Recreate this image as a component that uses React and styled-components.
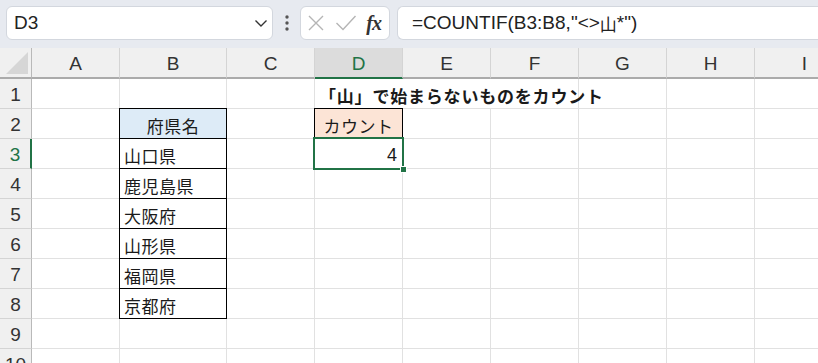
import React from "react";
import styled, { createGlobalStyle, css } from "styled-components";

const GREEN = "#217346";
const GRID = "#e1e1e1";

const GlobalStyle = createGlobalStyle`
  html, body {
    margin: 0;
    padding: 0;
    background: #fff;
    overflow: hidden;
  }
  body {
    font-family: "Liberation Sans", Arial, sans-serif;
  }
`;

const Page = styled.div`
  width: 818px;
  height: 363px;
  overflow: hidden;
  display: flex;
  flex-direction: column;
`;

const Toolbar = styled.div`
  display: flex;
  align-items: center;
  height: 48px;
  padding: 0 0 2px 6px;
  box-sizing: border-box;
  background: #e7eaf0;
  flex-shrink: 0;
`;

const Box = styled.div`
  height: 34px;
  box-sizing: border-box;
  background: #fff;
  border: 1px solid #d3d7de;
  border-radius: 6px;
  display: flex;
  align-items: center;
`;

const NameBox = styled(Box)`
  width: 267px;
  padding: 0 4px 0 7px;
  justify-content: space-between;
  font-size: 19px;
  color: #222;
`;

const Dots = styled.div`
  width: 27px;
  display: flex;
  justify-content: center;
`;

const FxBox = styled(Box)`
  width: 90px;
  padding: 0 6px 0 6px;
  justify-content: space-between;
`;

const Fx = styled.span`
  font-family: "Liberation Serif", "DejaVu Serif", serif;
  font-style: italic;
  font-weight: 700;
  font-size: 20px;
  color: #333;
  letter-spacing: -1px;
  margin-right: 2px;
`;

const FormulaBox = styled(Box)`
  flex: 1;
  margin-left: 7px;
  padding-left: 14px;
  border-right: none;
  border-radius: 6px 0 0 6px;
  font-size: 19px;
  color: #222;
  white-space: nowrap;
`;

const Cjk = styled.span`
  font-family: "Noto Sans CJK JP", sans-serif;
  font-size: 17px;
`;

const Sheet = styled.div`
  display: grid;
  grid-template-columns: 32px 88px 107px 88px 88px 88px 88px 88px 88px 100px;
  grid-template-rows: 31px;
  grid-auto-rows: 30px;
`;

const Corner = styled.div`
  background: #f0f0f0;
  border-right: 1px solid #b9b9b9;
  border-bottom: 2px solid #ababab;
  box-sizing: border-box;
  display: flex;
  align-items: flex-end;
  justify-content: flex-end;
  padding: 0 3px 3px 0;
`;

const ColHead = styled.div`
  box-sizing: border-box;
  background: ${(p) => (p.$active ? "#dcdcdc" : "#f0f0f0")};
  border-right: 1px solid #d4d4d4;
  border-bottom: 2px solid ${(p) => (p.$active ? GREEN : "#ababab")};
  color: ${(p) => (p.$active ? GREEN : "#333")};
  font-size: 19px;
  display: flex;
  align-items: center;
  justify-content: center;
  padding-top: 2px;
`;

const RowHead = styled.div`
  box-sizing: border-box;
  background: #f0f0f0;
  border-right: ${(p) => (p.$active ? `2px solid ${GREEN}` : "1px solid #b9b9b9")};
  border-bottom: 1px solid #d4d4d4;
  color: ${(p) => (p.$active ? GREEN : "#333")};
  font-size: 19px;
  display: flex;
  align-items: center;
  justify-content: center;
  padding-top: 2px;
`;

const Cell = styled.div`
  position: relative;
  box-sizing: border-box;
  border-right: 1px solid ${GRID};
  border-bottom: 1px solid ${GRID};
  background: ${(p) => p.$fill || "transparent"};
  display: flex;
  align-items: center;
  justify-content: ${(p) =>
    p.$align === "center" ? "center" : p.$align === "right" ? "flex-end" : "flex-start"};
  padding: 3px 4px 0 4px;
  font-family: "Noto Sans CJK JP", sans-serif;
  font-size: 17px;
  letter-spacing: 0.5px;
  color: #1a1a1a;
  white-space: nowrap;
  ${(p) => p.$span && css`grid-column: span ${p.$span};`}
  ${(p) =>
    p.$boxed &&
    css`
      &::after {
        content: "";
        position: absolute;
        inset: -1px;
        border: 1px solid #000;
        pointer-events: none;
      }
    `}
  ${(p) =>
    p.$selected &&
    css`
      z-index: 2;
      &::after {
        content: "";
        position: absolute;
        top: -2px;
        left: -2px;
        right: -2px;
        bottom: -2px;
        border: 2px solid ${GREEN};
        pointer-events: none;
      }
    `}
`;

const Title = styled.span`
  font-weight: 700;
  font-size: 17px;
  letter-spacing: 0.8px;
  position: relative;
  z-index: 1;
`;

const Num = styled.span`
  font-family: "Liberation Sans", Arial, sans-serif;
  font-size: 18px;
  letter-spacing: 0;
  margin-right: 1px;
`;

const FillHandle = styled.div`
  position: absolute;
  right: -5px;
  bottom: -5px;
  width: 5px;
  height: 5px;
  background: ${GREEN};
  border: 1px solid #fff;
  z-index: 3;
`;

const cols = ["A", "B", "C", "D", "E", "F", "G", "H", "I"];
const prefs = ["山口県", "鹿児島県", "大阪府", "山形県", "福岡県", "京都府"];

const Chevron = () => (
  <svg width="14" height="9" viewBox="0 0 14 9">
    <path d="M1.5 1.5 L7 7 L12.5 1.5" fill="none" stroke="#333" strokeWidth="1.4" />
  </svg>
);

const VDots = () => (
  <svg width="4" height="16" viewBox="0 0 4 16">
    <circle cx="2" cy="2" r="1.7" fill="#555" />
    <circle cx="2" cy="8" r="1.7" fill="#555" />
    <circle cx="2" cy="14" r="1.7" fill="#555" />
  </svg>
);

const Cross = () => (
  <svg width="18" height="18" viewBox="0 0 18 18">
    <path d="M2 2 L16 16 M16 2 L2 16" stroke="#b5b5b5" strokeWidth="1.4" fill="none" />
  </svg>
);

const Check = () => (
  <svg width="22" height="18" viewBox="0 0 22 18">
    <path d="M1.5 9 L8 15.5 L20.5 2" stroke="#b5b5b5" strokeWidth="1.4" fill="none" />
  </svg>
);

const CornerMark = () => (
  <svg width="22" height="22" viewBox="0 0 22 22">
    <polygon points="22,0 22,22 0,22" fill="#d6d6d6" />
  </svg>
);

function rowCells(r) {
  const out = [];
  if (r === 1) {
    out.push(<Cell key="A" />, <Cell key="B" />, <Cell key="C" />);
    out.push(
      <Cell key="D" $span={3}>
        <Title>「山」で始まらないものをカウント</Title>
      </Cell>
    );
    out.push(<Cell key="G" />, <Cell key="H" />, <Cell key="I" />);
    return out;
  }
  cols.forEach((c) => {
    let props = {};
    let content = null;
    if (c === "B" && r === 2) {
      props = { $boxed: true, $fill: "#ddebf7", $align: "center" };
      content = "府県名";
    } else if (c === "B" && r >= 3 && r <= 8) {
      props = { $boxed: true };
      content = prefs[r - 3];
    } else if (c === "D" && r === 2) {
      props = { $boxed: true, $fill: "#fce4d6", $align: "center" };
      content = "カウント";
    } else if (c === "D" && r === 3) {
      props = { $selected: true, $align: "right" };
      content = (
        <>
          <Num>4</Num>
          <FillHandle />
        </>
      );
    }
    out.push(
      <Cell key={c} {...props}>
        {content}
      </Cell>
    );
  });
  return out;
}

export default function App() {
  const rows = Array.from({ length: 10 }, (_, i) => i + 1);
  return (
    <Page>
      <GlobalStyle />
      <Toolbar>
        <NameBox>
          <span>D3</span>
          <Chevron />
        </NameBox>
        <Dots>
          <VDots />
        </Dots>
        <FxBox>
          <Cross />
          <Check />
          <Fx>fx</Fx>
        </FxBox>
        <FormulaBox>
          =COUNTIF(B3:B8,"&lt;&gt;<Cjk>山</Cjk>*")
        </FormulaBox>
      </Toolbar>
      <Sheet>
        <Corner>
          <CornerMark />
        </Corner>
        {cols.map((c) => (
          <ColHead key={c} $active={c === "D"}>
            {c}
          </ColHead>
        ))}
        {rows.map((r) => (
          <React.Fragment key={r}>
            <RowHead $active={r === 3}>{r}</RowHead>
            {rowCells(r)}
          </React.Fragment>
        ))}
      </Sheet>
    </Page>
  );
}
